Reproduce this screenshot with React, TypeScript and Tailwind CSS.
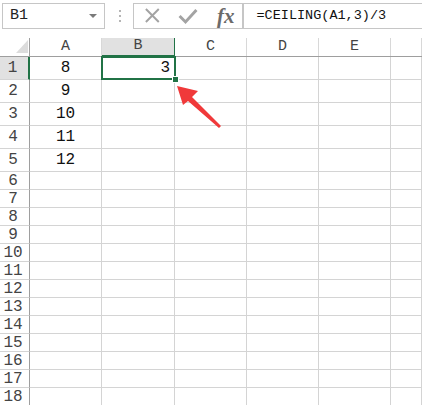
import React from 'react';

const COLS = ['A', 'B', 'C', 'D', 'E', ''];
const COL_W = ['w-[72px]', 'w-[73px]', 'w-[72px]', 'w-[72px]', 'w-[72px]', 'flex-1'];
const VALUES: Record<number, string> = { 1: '8', 2: '9', 3: '10', 4: '11', 5: '12' };

const mono = { fontFamily: '"Liberation Mono", "DejaVu Sans Mono", monospace' };

const Toolbar: React.FC = () => (
  <div className="flex h-[38px] items-start pt-[3px]">
    <div className="ml-[2px] flex h-[26px] w-[103px] items-center justify-between border border-[#c6c6c6] pl-[7px] pr-[7px]">
      <span className="text-[15px] text-[#222]">B1</span>
      <span className="h-0 w-0 border-x-[4px] border-t-[4px] border-x-transparent border-t-[#7a7a7a]" />
    </div>
    <div className="ml-[13px] flex h-[26px] w-[3px] flex-col items-center justify-center gap-[3px]">
      <span className="h-[2px] w-[2px] bg-[#b5b5b5]" />
      <span className="h-[2px] w-[2px] bg-[#b5b5b5]" />
      <span className="h-[2px] w-[2px] bg-[#b5b5b5]" />
    </div>
    <div className="ml-[12px] flex h-[26px] w-[111px] items-center border border-[#c6c6c6]">
      <svg width="110" height="24" viewBox="0 0 110 24">
        <path d="M12 5 L25 18 M25 5 L12 18" stroke="#a3a3a3" strokeWidth="2" fill="none" />
        <path d="M46 12 L52 18 L63 6" stroke="#a3a3a3" strokeWidth="3" fill="none" />
      </svg>
    </div>
    <div className="-ml-[27px] flex h-[26px] items-center">
      <span
        className="text-[21px] font-bold italic leading-none text-[#6b6b6b]"
        style={{ fontFamily: '"Liberation Serif", serif' }}
      >
        fx
      </span>
    </div>
    <div className="ml-[7px] flex h-[26px] flex-1 items-center border border-r-0 border-[#c6c6c6] pl-[14px]">
      <span className="text-[13.5px] text-[#111]">=CEILING(A1,3)/3</span>
    </div>
  </div>
);

const App: React.FC = () => {
  const rows = Array.from({ length: 18 }, (_, i) => i + 1);

  return (
    <div className="relative h-[405px] w-[422px] overflow-hidden bg-white" style={mono}>
      <Toolbar />

      {/* column headers */}
      <div className="flex h-[19px] border-b border-[#9e9e9e]">
        <div className="relative w-[30px] border-r border-[#9e9e9e]">
          <svg className="absolute left-[16px] top-[2px]" width="12" height="14" viewBox="0 0 12 14">
            <polygon points="12,0 12,13 0,13" fill="#dcdcdc" />
          </svg>
        </div>
        {COLS.map((c, i) => (
          <div
            key={i}
            className={`${COL_W[i]} flex items-center justify-center text-[15px] text-[#444] ${
              c === 'B'
                ? 'border-b-2 border-r border-[#217346] bg-[#e1e1e1] -mb-[1px]'
                : 'border-r border-[#d8d8d8]'
            }`}
          >
            {c}
          </div>
        ))}
      </div>

      {/* rows */}
      {rows.map((r) => (
        <div key={r} className={`flex ${r <= 5 ? 'h-[23px]' : 'h-[18px]'}`}>
          <div
            className={`flex w-[30px] items-center justify-center border-b pr-[3px] text-[16px] text-[#444] ${
              r === 1
                ? 'border-r-2 border-b-[#d4d4d4] border-r-[#217346] bg-[#e1e1e1]'
                : 'border-r border-[#9e9e9e] border-b-[#d4d4d4]'
            }`}
          >
            {r}
          </div>
          {COLS.map((c, i) => (
            <div
              key={i}
              className={`${COL_W[i]} flex items-center border-b border-r border-[#d4d4d4] text-[16px] text-[#111] ${
                c === 'A' ? 'justify-center' : 'justify-end pr-[4px]'
              }`}
            >
              {c === 'A' ? VALUES[r] : c === 'B' && r === 1 ? '3' : ''}
            </div>
          ))}
        </div>
      ))}

      {/* selection on B1 */}
      <div className="absolute left-[101px] top-[56px] h-[24px] w-[75px] border-2 border-[#217346]" />
      <div className="absolute left-[172px] top-[76px] h-[7px] w-[7px] border border-white bg-[#217346]" />

      {/* red arrow */}
      <svg className="absolute left-0 top-0" width="422" height="405" viewBox="0 0 422 405">
        <polygon
          points="177,86 198,91 192,97 221,126 219,128 188,101 183,105"
          fill="#f0393a"
        />
      </svg>
    </div>
  );
};

export default App;
